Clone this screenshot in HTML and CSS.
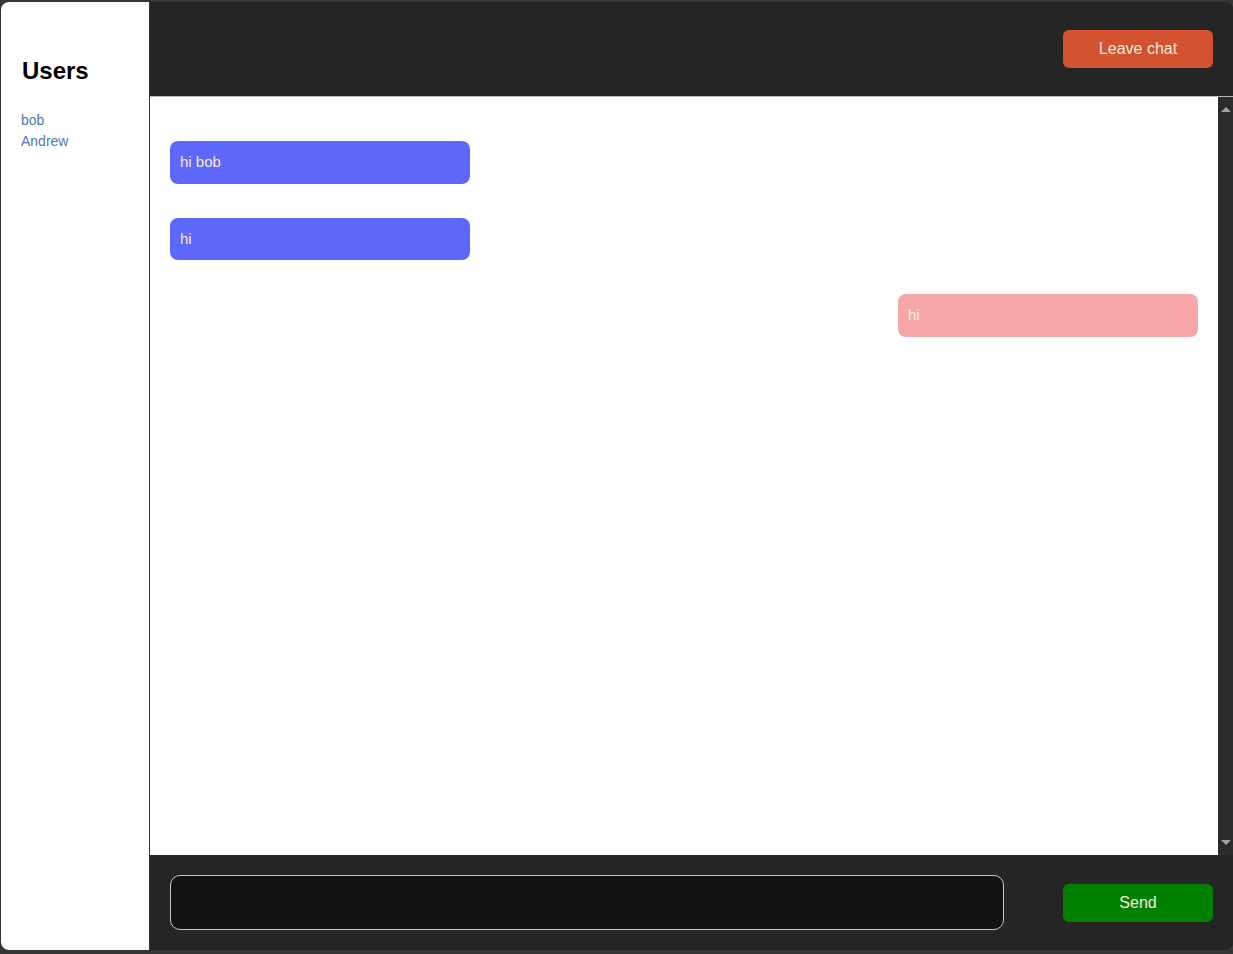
FILE: index.html
```html
<!DOCTYPE html>
<html lang="en">
<head>
<meta charset="utf-8">
<title>Chat</title>
<link rel="stylesheet" href="styles.css">
</head>
<body>
<div class="app">
  <aside class="sidebar">
    <h2 class="sidebar-title">Users</h2>
    <ul class="user-list">
      <li class="user">bob</li>
      <li class="user">Andrew</li>
    </ul>
  </aside>
  <main class="chat">
    <header class="chat-header">
      <button class="btn btn-leave">Leave chat</button>
    </header>
    <div class="messages-wrap">
      <section class="messages">
        <div class="msg msg-in">hi bob</div>
        <div class="msg msg-in">hi</div>
        <div class="msg msg-out">hi</div>
      </section>
      <div class="scrollbar">
        <span class="arrow arrow-up"></span>
        <span class="arrow arrow-down"></span>
      </div>
    </div>
    <footer class="chat-footer">
      <input class="chat-input" type="text">
      <button class="btn btn-send">Send</button>
    </footer>
  </main>
</div>
</body>
</html>
```
FILE: styles.css
```css
* { box-sizing: border-box; }
html, body { height: 100%; }
body {
  margin: 0;
  padding: 2px 0 4px 1px;
  background: #363636;
  font-family: "Liberation Sans", Arial, sans-serif;
}
.app {
  display: flex;
  height: 948px;
  border-radius: 8px;
  overflow: hidden;
  background: #252525;
}
.sidebar {
  width: 149px;
  flex: none;
  background: #fff;
  border-right: 1px solid #333;
  padding: 55px 20px 0 20px;
}
.sidebar-title {
  margin: 0 0 25px 1px;
  font-size: 24px;
  line-height: 28px;
  font-weight: bold;
  color: #000;
}
.user-list {
  list-style: none;
  margin: 0;
  padding: 0;
}
.user {
  font-size: 14px;
  line-height: 21px;
  color: #4d78b3;
}
.chat {
  flex: 1;
  display: flex;
  flex-direction: column;
  min-width: 0;
}
.chat-header {
  height: 95px;
  flex: none;
  background: #252525;
  border-bottom: 1px solid #b8b8b8;
  display: flex;
  align-items: center;
  justify-content: flex-end;
  padding: 0 20px 1px 0;
}
.btn {
  width: 150px;
  height: 38px;
  border: none;
  border-radius: 6px;
  font-family: "Liberation Sans", Arial, sans-serif;
  font-size: 16px;
  color: #faebd7;
  cursor: pointer;
}
.btn-leave { background: #d35230; }
.btn-send { background: #008000; margin-left: auto; }
.messages-wrap {
  flex: 1;
  display: flex;
  min-height: 0;
}
.messages {
  flex: 1;
  background: #fff;
  display: flex;
  flex-direction: column;
  gap: 34px;
  padding: 44px 20px 20px 20px;
}
.scrollbar {
  width: 15px;
  flex: none;
  background: #2c2c2c;
  display: flex;
  flex-direction: column;
  justify-content: space-between;
  align-items: center;
  padding: 10px 0 10px 0;
}
.arrow {
  width: 0;
  height: 0;
  border-left: 5px solid transparent;
  border-right: 5px solid transparent;
}
.arrow-up { border-bottom: 5px solid #a3a3a3; }
.arrow-down { border-top: 5px solid #a3a3a3; }
.msg {
  width: 300px;
  padding: 12px 10px;
  font-size: 15px;
  line-height: 18.5px;
  border-radius: 8px;
  color: #faebd7;
}
.msg-in { background: #5d68fb; }
.msg-out { background: #f7a7a8; align-self: flex-end; color: #fff4ee; }
.chat-footer {
  height: 95px;
  flex: none;
  background: #252525;
  display: flex;
  align-items: center;
  padding: 0 20px 0 20px;
}
.chat-input {
  width: 834px;
  height: 55px;
  background: #121212;
  border: 1px solid #c8c8c8;
  border-radius: 10px;
  color: #fff;
  font-size: 16px;
  padding: 0 12px;
  outline: none;
}
```
